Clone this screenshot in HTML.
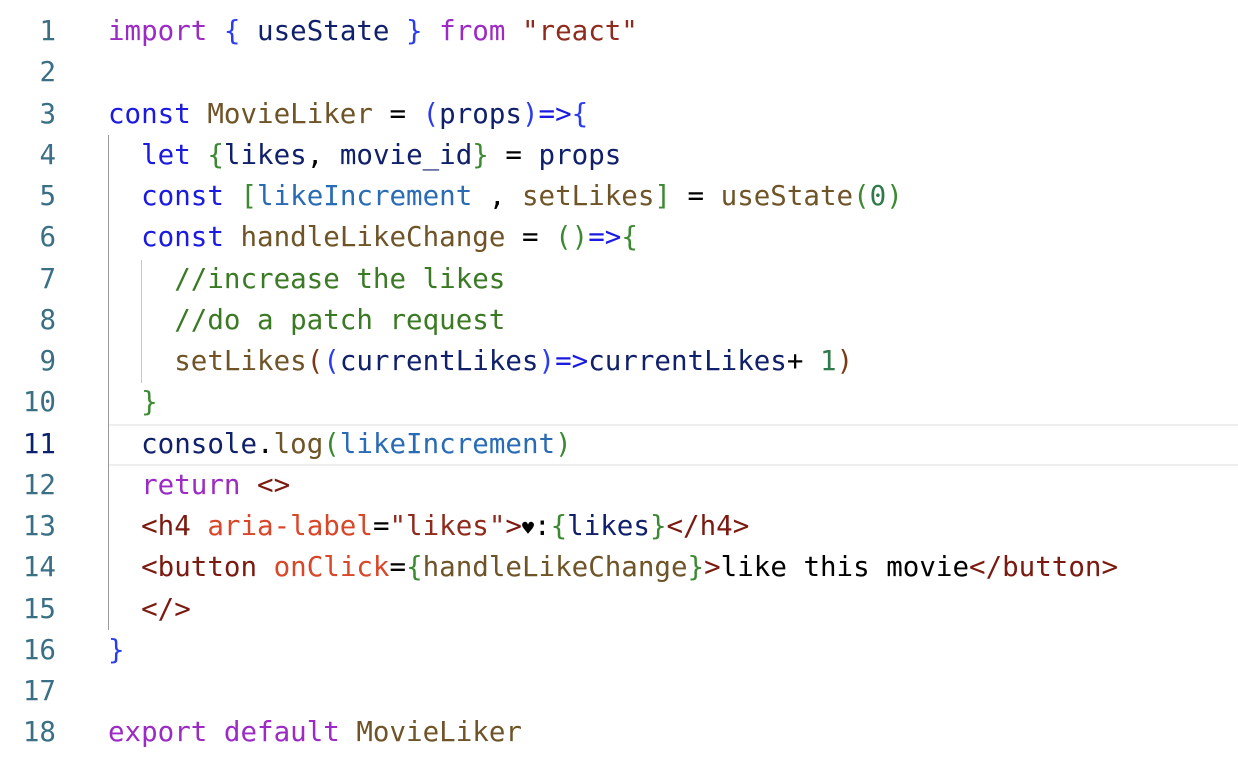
<!DOCTYPE html>
<html><head><meta charset="utf-8"><style>
html,body{margin:0;padding:0;background:#fff;width:1238px;height:780px;overflow:hidden}
.ed{position:relative;width:1238px;height:780px;font-family:"DejaVu Sans Mono","Liberation Mono",monospace;font-size:27.5px}
.ln{position:absolute;left:0;width:56px;text-align:right;color:#3a6f86;height:41.24px;line-height:41.24px}
.cd{position:absolute;left:108px;white-space:pre;height:41.24px;line-height:41.24px;color:#000}
.cur{color:#0b216f}
.hl{position:absolute;left:108px;right:0;top:424px;height:38px;border-top:2px solid #eeeeee;border-bottom:2px solid #eeeeee}
.g{position:absolute;width:1px;background:#c8c8c8}
.kw{color:#9b2bc4}.k{color:#1a1ae0}.v{color:#10206a}.f{color:#6f5428}.s{color:#8f2a1c}.c{color:#2a6bb5}
.b1{color:#2a3cee}.b2{color:#3b8a32}.b3{color:#7b3814}.n{color:#2f7a4a}.cm{color:#3b7a24}.t{color:#7a1a10}.a{color:#d9472a}
.h{font-size:20px}
</style></head><body><div class="ed">
<div class="hl"></div>
<div class="g" style="left:108px;top:135px;height:495px;background:#9a9a9a"></div>
<div class="g" style="left:141px;top:260px;height:123px"></div>
<div class="ln" style="top:11px">1</div><div class="cd" style="top:11px"><span class="kw">import</span> <span class="b1">{</span> <span class="v">useState</span> <span class="b1">}</span> <span class="kw">from</span> <span class="s">"react"</span></div>
<div class="ln" style="top:52px">2</div>
<div class="ln" style="top:94px">3</div><div class="cd" style="top:94px"><span class="k">const</span> <span class="f">MovieLiker</span> = <span class="b1">(</span><span class="v">props</span><span class="b1">)</span><span class="k">=&gt;</span><span class="b1">{</span></div>
<div class="ln" style="top:135px">4</div><div class="cd" style="top:135px">  <span class="k">let</span> <span class="b2">{</span><span class="v">likes</span>, <span class="v">movie_id</span><span class="b2">}</span> = <span class="v">props</span></div>
<div class="ln" style="top:176px">5</div><div class="cd" style="top:176px">  <span class="k">const</span> <span class="b2">[</span><span class="c">likeIncrement</span> , <span class="f">setLikes</span><span class="b2">]</span> = <span class="f">useState</span><span class="b2">(</span><span class="n">0</span><span class="b2">)</span></div>
<div class="ln" style="top:217px">6</div><div class="cd" style="top:217px">  <span class="k">const</span> <span class="f">handleLikeChange</span> = <span class="b2">()</span><span class="k">=&gt;</span><span class="b2">{</span></div>
<div class="ln" style="top:259px">7</div><div class="cd" style="top:259px">    <span class="cm">//increase the likes</span></div>
<div class="ln" style="top:300px">8</div><div class="cd" style="top:300px">    <span class="cm">//do a patch request</span></div>
<div class="ln" style="top:341px">9</div><div class="cd" style="top:341px">    <span class="f">setLikes</span><span class="b3">(</span><span class="b1">(</span><span class="v">currentLikes</span><span class="b1">)</span><span class="k">=&gt;</span><span class="v">currentLikes</span>+ <span class="n">1</span><span class="b3">)</span></div>
<div class="ln" style="top:382px">10</div><div class="cd" style="top:382px">  <span class="b2">}</span></div>
<div class="ln cur" style="top:424px">11</div><div class="cd" style="top:424px">  <span class="v">console</span>.<span class="f">log</span><span class="b2">(</span><span class="c">likeIncrement</span><span class="b2">)</span></div>
<div class="ln" style="top:465px">12</div><div class="cd" style="top:465px">  <span class="kw">return</span> <span class="t">&lt;&gt;</span></div>
<div class="ln" style="top:506px">13</div><div class="cd" style="top:506px">  <span class="t">&lt;h4</span> <span class="a">aria-label</span>=<span class="s">"likes"</span><span class="t">&gt;</span><span class="h">♥</span>:<span class="b2">{</span><span class="v">likes</span><span class="b2">}</span><span class="t">&lt;/h4&gt;</span></div>
<div class="ln" style="top:547px">14</div><div class="cd" style="top:547px">  <span class="t">&lt;button</span> <span class="a">onClick</span>=<span class="b2">{</span><span class="f">handleLikeChange</span><span class="b2">}</span><span class="t">&gt;</span>like this movie<span class="t">&lt;/button&gt;</span></div>
<div class="ln" style="top:589px">15</div><div class="cd" style="top:589px">  <span class="t">&lt;/&gt;</span></div>
<div class="ln" style="top:630px">16</div><div class="cd" style="top:630px"><span class="b1">}</span></div>
<div class="ln" style="top:671px">17</div>
<div class="ln" style="top:712px">18</div><div class="cd" style="top:712px"><span class="kw">export</span> <span class="kw">default</span> <span class="f">MovieLiker</span></div>
</div></body></html>
